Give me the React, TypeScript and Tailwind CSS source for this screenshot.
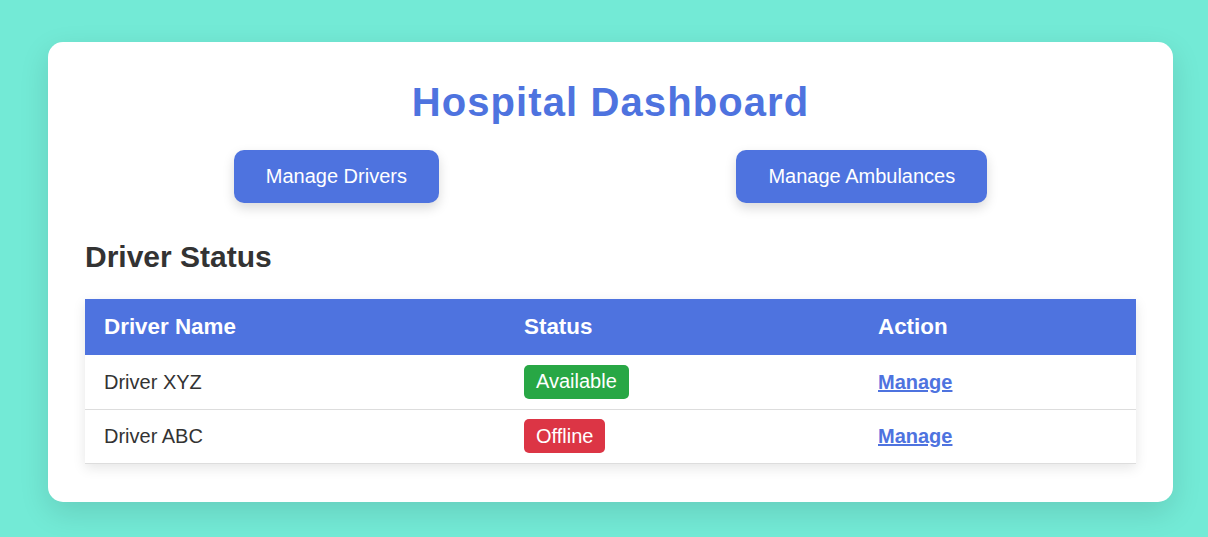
import React from "react";

type Driver = {
  name: string;
  status: "Available" | "Offline";
};

const drivers: Driver[] = [
  { name: "Driver XYZ", status: "Available" },
  { name: "Driver ABC", status: "Offline" },
];

const StatusBadge: React.FC<{ status: Driver["status"] }> = ({ status }) => (
  <span
    className={`inline-block rounded-[5px] px-3 py-[5.5px] leading-[23px] text-white ${
      status === "Available" ? "bg-[#28a745]" : "bg-[#dc3545]"
    }`}
  >
    {status}
  </span>
);

export default function App() {
  return (
    <div
      className="min-h-screen w-full bg-[#73ead6] pt-[42px] pb-[35px]"
      style={{ fontFamily: '"Liberation Sans", Arial, sans-serif' }}
    >
      <div className="ml-[48px] w-[1125px] rounded-[15px] bg-white px-[37px] pt-[37px] pb-[38px] shadow-[0_10px_30px_rgba(0,0,0,0.12)]">
        {/* タイトル */}
        <h1 className="text-center text-[40px] font-bold leading-[46px] tracking-[1.1px] text-[#4e73df]">
          Hospital Dashboard
        </h1>

        {/* ボタン */}
        <div className="mt-[25px] flex justify-around">
          <button className="rounded-[10px] bg-[#4e73df] px-8 py-[15px] text-[20px] leading-[23px] text-white shadow-[0_5px_12px_rgba(0,0,0,0.15)]">
            Manage Drivers
          </button>
          <button className="rounded-[10px] bg-[#4e73df] px-8 py-[15px] text-[20px] leading-[23px] text-white shadow-[0_5px_12px_rgba(0,0,0,0.15)]">
            Manage Ambulances
          </button>
        </div>

        <h2 className="mt-[36px] text-[30px] font-bold leading-[35px] text-[#333]">
          Driver Status
        </h2>

        {/* テーブル */}
        <table className="mt-[25px] w-full border-collapse text-left text-[20px] shadow-[0_4px_12px_rgba(0,0,0,0.1)]">
          <thead>
            <tr className="h-[56px] bg-[#4e73df] text-[22.4px] text-white">
              <th className="w-[420px] pl-[19px] font-bold">Driver Name</th>
              <th className="w-[354px] pl-[19px] font-bold">Status</th>
              <th className="pl-[19px] font-bold">Action</th>
            </tr>
          </thead>
          <tbody>
            {drivers.map((d) => (
              <tr key={d.name} className="h-[54px] border-b border-[#ddd] text-[#333]">
                <td className="pl-[19px]">{d.name}</td>
                <td className="pl-[19px]">
                  <StatusBadge status={d.status} />
                </td>
                <td className="pl-[19px]">
                  <a href="#" className="font-bold text-[#4e73df] underline">
                    Manage
                  </a>
                </td>
              </tr>
            ))}
          </tbody>
        </table>
      </div>
    </div>
  );
}
